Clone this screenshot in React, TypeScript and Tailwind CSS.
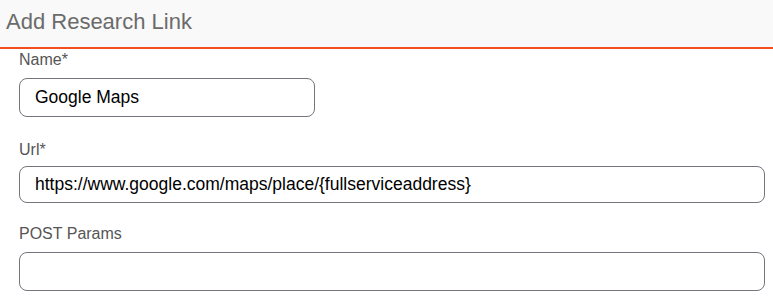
import React from 'react';

const Field: React.FC<{
  label: string;
  value?: string;
  className?: string;
  labelClass?: string;
  inputClass?: string;
}> = ({ label, value = '', className = '', labelClass = 'mb-[8px]', inputClass = '' }) => (
  <div className={className}>
    <label className={`block text-[16px] leading-[20px] text-[#555] ${labelClass}`}>{label}</label>
    <input
      type="text"
      defaultValue={value}
      className={`block rounded-[8px] border border-[#73767d] bg-white px-[15px] text-[17.5px] text-black outline-none ${inputClass}`}
    />
  </div>
);

const App: React.FC = () => {
  return (
    <div className="h-[301px] w-[773px] overflow-hidden bg-white font-['Liberation_Sans',Arial,sans-serif]">
      <header className="flex h-[49px] items-center border-b-2 border-[#f24e1e] bg-[#f9f9f9] px-[6px]">
        <h1 className="text-[22px] leading-none text-[#6b6b6b] -mt-[3px]">Add Research Link</h1>
      </header>

      <main className="pl-[19px] pr-[8px] pt-[1px]">
        <Field label="Name*" value="Google Maps" inputClass="h-[39px] w-[296px]" />
        <Field
          label="Url*"
          value="https://www.google.com/maps/place/{fullserviceaddress}"
          className="mt-[23px]"
          labelClass="mb-[6px]"
          inputClass="h-[37px] w-full"
        />
        <Field label="POST Params" className="mt-[21px]" inputClass="h-[39px] w-full" />
      </main>
    </div>
  );
};

export default App;
